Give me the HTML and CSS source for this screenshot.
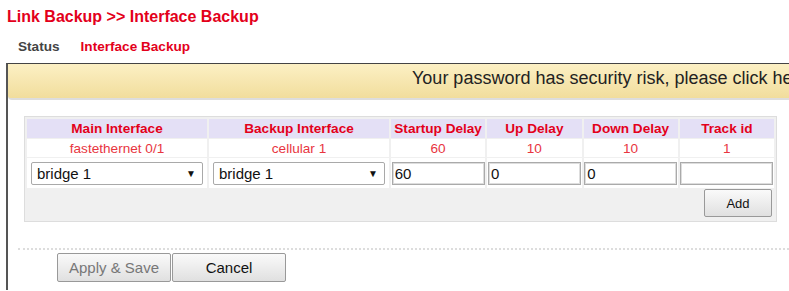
FILE: index.html
```html
<!DOCTYPE html>
<html lang="en">
<head>
    <meta charset="UTF-8">
    <title>Interface Backup</title>
    <link rel="stylesheet" href="styles.css">
</head>
<body>
    <h1 class="page-title">Link Backup &gt;&gt; Interface Backup</h1>

    <div class="tabs">
        <span class="tab">Status</span>
        <span class="tab active">Interface Backup</span>
    </div>

    <div class="content">
        <div class="notice">Your password has security risk, please click here to modify.</div>

        <div class="panel">
            <table class="backup-table">
                <tr class="head-row">
                    <th class="col-wide">Main Interface</th>
                    <th class="col-wide">Backup Interface</th>
                    <th>Startup Delay</th>
                    <th>Up Delay</th>
                    <th>Down Delay</th>
                    <th>Track id</th>
                </tr>
                <tr class="data-row">
                    <td>fastethernet 0/1</td>
                    <td>cellular 1</td>
                    <td>60</td>
                    <td>10</td>
                    <td>10</td>
                    <td>1</td>
                </tr>
                <tr class="edit-row">
                    <td><div class="select"><span>bridge 1</span><span class="arrow">&#9660;</span></div></td>
                    <td><div class="select"><span>bridge 1</span><span class="arrow">&#9660;</span></div></td>
                    <td><input class="field" type="text" value="60"></td>
                    <td><input class="field" type="text" value="0"></td>
                    <td><input class="field" type="text" value="0"></td>
                    <td><input class="field" type="text" value=""></td>
                </tr>
                <tr class="add-row">
                    <td colspan="6"><button class="btn add-btn">Add</button></td>
                </tr>
            </table>
        </div>

        <div class="actions">
            <button class="btn wide-btn disabled">Apply &amp; Save</button>
            <button class="btn wide-btn">Cancel</button>
        </div>
    </div>
</body>
</html>
```

FILE: styles.css
```css
body {
    margin: 0;
    padding: 0;
    font-family: 'Liberation Sans', Arial, sans-serif;
    background: #fff;
    color: #222;
    overflow: hidden;
}

.page-title {
    margin: 0;
    padding: 8px 0 0 7px;
    height: 21px;
    font-size: 16px;
    font-weight: bold;
    color: #e3001b;
}

.tabs {
    display: flex;
    gap: 21px;
    padding: 10px 0 0 18px;
    height: 24px;
    font-size: 13.6px;
    font-weight: bold;
}

.tab {
    color: #444;
}

.tab.active {
    color: #e3001b;
}

.content {
    margin-left: 6px;
    border-left: 2px solid #555;
    border-top: 1px solid #444;
    height: 226px;
    overflow: hidden;
}

.notice {
    height: 34px;
    line-height: 28px;
    padding-left: 404px;
    white-space: nowrap;
    overflow: hidden;
    font-size: 18px;
    color: #222;
    background: linear-gradient(#fcf0c4, #f1dd9c);
    border-bottom: 2px solid #ddd;
    border-bottom-left-radius: 4px;
}

.panel {
    margin: 16px 4px 0 16px;
    width: 751px;
    background: #f0f0f0;
    border: 1px solid #ddd;
    padding: 1px 0 0 0;
}

.backup-table {
    border-collapse: separate;
    border-spacing: 2px 1px;
    width: 100%;
    font-size: 13.6px;
}

.backup-table th,
.backup-table td {
    padding: 0;
    text-align: center;
}

.head-row th {
    height: 19px;
    background: #e4e0f6;
    color: #e3001b;
    font-weight: bold;
}

.col-wide {
    width: 180px;
}

.data-row td {
    height: 18px;
    background: #fff;
    color: #e8353f;
}

.edit-row td {
    height: 30px;
    background: #fff;
}

.select {
    display: flex;
    justify-content: space-between;
    align-items: center;
    box-sizing: border-box;
    width: 172px;
    height: 23px;
    margin: 0 auto;
    padding: 0 6px 0 5px;
    border: 1px solid #a9a9a9;
    border-radius: 2px;
    background: #fff;
    font-size: 15px;
    color: #111;
}

.arrow {
    font-size: 10px;
}

.field {
    box-sizing: border-box;
    width: 93px;
    height: 23px;
    margin: 0;
    padding: 0 2px;
    border: 1px solid #aaa;
    box-shadow: inset 0 0 0 1px #ddd;
    font-family: 'Liberation Sans', Arial, sans-serif;
    font-size: 15px;
    color: #111;
}

.add-row td {
    text-align: right;
    padding: 0 2px 3px 0;
}

.btn {
    font-family: 'Liberation Sans', Arial, sans-serif;
    font-size: 13px;
    color: #111;
    background: linear-gradient(#fafafa, #e0e0e0);
    border: 1px solid #999;
    border-radius: 2px;
    cursor: pointer;
}

.add-btn {
    width: 68px;
    height: 28px;
}

.actions {
    margin: 26px 0 0 10px;
    padding: 3px 0 0 39px;
    border-top: 2px dotted #ddd;
    display: flex;
    gap: 1px;
}

.wide-btn {
    width: 114px;
    height: 29px;
    font-size: 15px;
}

.wide-btn.disabled {
    color: #777;
}
```
